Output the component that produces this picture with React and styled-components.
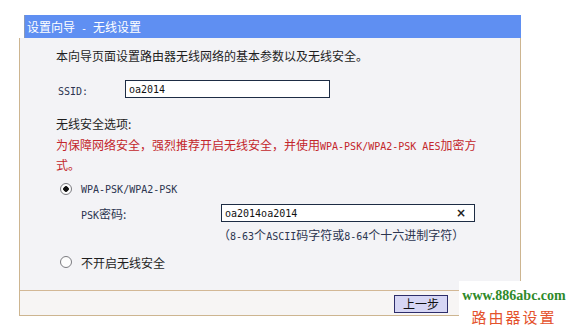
import React from 'react';
import styled, { createGlobalStyle } from 'styled-components';

const Global = createGlobalStyle`
  body {
    margin: 0;
    background: #fff;
    font-family: "Noto Sans CJK SC", "Noto Sans", sans-serif;
    font-size: 12px;
    color: #1e1e1e;
  }
`;

const App = () => {
  return (
    <>
      <Global />
      <Page>
        <Panel>
          <TitleBar>
            设置向导<Latin>&nbsp;-&nbsp;</Latin>无线设置
          </TitleBar>
          <Body>
            <Content>
              <Line>本向导页面设置路由器无线网络的基本参数以及无线安全。</Line>
              <FieldRow $top={15} $indent={2}>
                <Label $width={67}>
                  <Latin>SSID:</Latin>
                </Label>
                <Field $width={205}>
                  <Latin>oa2014</Latin>
                </Field>
              </FieldRow>
              <Line $top={17}>无线安全选项:</Line>
              <Warning>
                为保障网络安全，强烈推荐开启无线安全，并使用<Latin>WPA-PSK/WPA2-PSK AES</Latin>加密方
                <br />
                式。
              </Warning>
              <OptionRow $top={6}>
                <Radio $checked />
                <Latin $tone="#2c3550">WPA-PSK/WPA2-PSK</Latin>
              </OptionRow>
              <FieldRow $top={6} $indent={25}>
                <Label $width={140}>
                  <Latin $tone="#2c3550">PSK</Latin>密码:
                </Label>
                <Field $width={254}>
                  <Latin>oa2014oa2014</Latin>
                  <Clear>×</Clear>
                </Field>
              </FieldRow>
              <Hint>
                （<Latin>8-63</Latin>个<Latin>ASCII</Latin>码字符或<Latin>8-64</Latin>个十六进制字符）
              </Hint>
              <OptionRow $top={7}>
                <Radio />
                <span>不开启无线安全</span>
              </OptionRow>
            </Content>
            <Footer>
              <Button>上一步</Button>
            </Footer>
          </Body>
        </Panel>
        <Watermark>
          <Site>www.886abc.com</Site>
          <Brand>路由器设置</Brand>
        </Watermark>
      </Page>
    </>
  );
};

export default App;

const Page = styled.div`
  position: relative;
  width: 569px;
  height: 331px;
  padding: 15px 0 0 19px;
  box-sizing: border-box;
  overflow: hidden;
`;

const Panel = styled.div`
  width: 502px;
`;

const TitleBar = styled.div`
  margin-left: 5px;
  height: 23px;
  padding-left: 2px;
  background: #5f8ff2;
  border-left: 1px solid #8a9ab8;
  color: #fff;
  line-height: 23px;
  white-space: nowrap;
`;

const Body = styled.div`
  border: 1px solid #cdb590;
  border-top: none;
  background: #f3f3f6;
`;

const Content = styled.div`
  height: 252px;
  box-sizing: border-box;
  padding: 9px 0 0 36px;
  display: flex;
  flex-direction: column;
  align-items: flex-start;
`;

const Latin = styled.span`
  font-family: "DejaVu Sans Mono", "Liberation Mono", monospace;
  font-size: 10px;
  color: ${(p) => p.$tone || 'inherit'};
`;

const Line = styled.div`
  margin-top: ${(p) => p.$top || 0}px;
  line-height: 18px;
  white-space: nowrap;
`;

const Warning = styled.div`
  margin-top: 3px;
  line-height: 18px;
  color: #c3262b;
  white-space: nowrap;
`;

const FieldRow = styled.div`
  margin-top: ${(p) => p.$top}px;
  padding-left: ${(p) => p.$indent}px;
  display: flex;
  align-items: center;
  height: 18px;
`;

const Label = styled.div`
  width: ${(p) => p.$width}px;
  color: #2c3550;
  white-space: nowrap;
`;

const Field = styled.div`
  width: ${(p) => p.$width}px;
  height: 18px;
  box-sizing: border-box;
  border: 1px solid #1d2c44;
  background: #fff;
  display: flex;
  align-items: center;
  justify-content: space-between;
  padding: 0 8px 0 3px;
  color: #111;
`;

const Clear = styled.span`
  font-family: "DejaVu Sans", sans-serif;
  font-size: 12px;
  font-weight: bold;
  color: #222;
`;

const Hint = styled.div`
  margin-top: 4px;
  padding-left: 162px;
  line-height: 18px;
  color: #2c3550;
  white-space: nowrap;
`;

const OptionRow = styled.div`
  margin-top: ${(p) => p.$top}px;
  padding-left: 4px;
  height: 18px;
  display: flex;
  align-items: center;
  gap: 9px;
`;

const Radio = styled.span`
  width: 12px;
  height: 12px;
  box-sizing: border-box;
  border-radius: 50%;
  border: 1px solid #7b7b80;
  background: radial-gradient(circle, #111 0 2.5px, #fdfdfd 3px);
  ${(p) => !p.$checked && 'background: #fdfdfd;'}
`;

const Footer = styled.div`
  height: 25px;
  border-top: 1px solid #d3b895;
  background: #f7f5f4;
  display: flex;
  justify-content: flex-end;
  align-items: flex-start;
  padding: 4px 72px 0 0;
  box-sizing: border-box;
`;

const Button = styled.button`
  width: 54px;
  height: 18px;
  padding: 0;
  border: 1px solid #2d2d6a;
  background: #d6d6f4;
  font-family: "Noto Sans CJK SC", sans-serif;
  font-size: 12px;
  line-height: 16px;
  color: #111;
`;

const Watermark = styled.div`
  position: absolute;
  left: 459px;
  top: 281px;
  width: 110px;
  height: 50px;
  background: #fff;
  display: flex;
  flex-direction: column;
  align-items: center;
`;

const Site = styled.div`
  margin-top: 7px;
  font-family: "Liberation Serif", serif;
  font-weight: bold;
  font-size: 14px;
  line-height: 16px;
  color: #2f8a2a;
`;

const Brand = styled.div`
  margin-top: 3px;
  font-family: "Noto Sans CJK SC", sans-serif;
  font-size: 15px;
  letter-spacing: 2px;
  line-height: 20px;
  color: #e4522c;
`;
